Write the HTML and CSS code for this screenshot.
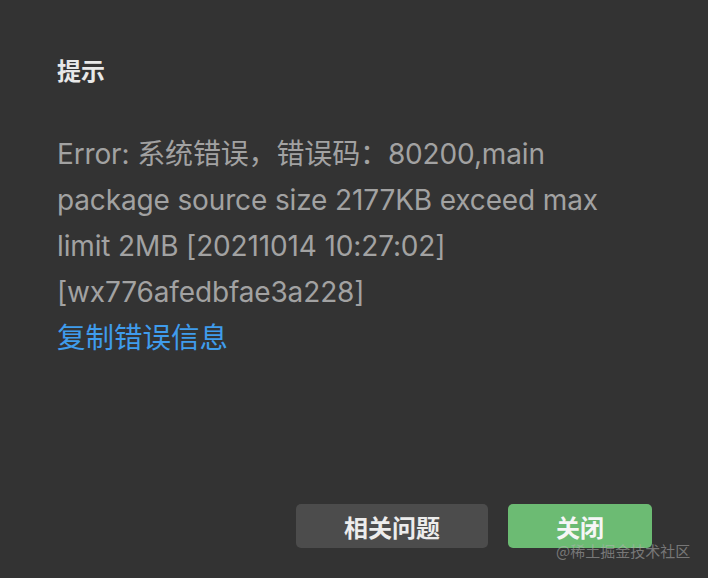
FILE: index.html
```html
<!DOCTYPE html>
<html lang="zh">
<head>
<meta charset="utf-8">
<link rel="stylesheet" href="styles.css">
</head>
<body>
<div class="dialog">
  <h1 class="title">提示</h1>
  <div class="message">
    <p class="error">Error: 系统错误，错误码：80200,main package source size 2177KB exceed max limit 2MB [20211014 10:27:02] [wx776afedbfae3a228]</p>
    <a class="copy" href="#">复制错误信息</a>
  </div>
  <div class="actions">
    <button class="btn btn-secondary">相关问题</button>
    <button class="btn btn-primary">关闭</button>
  </div>
  <div class="watermark">@稀土掘金技术社区</div>
</div>
</body>
</html>
```
FILE: styles.css
```css
html, body {
  margin: 0;
  padding: 0;
  background: #333333;
}
body {
  width: 708px;
  height: 578px;
  font-family: Inter, "Noto Sans CJK SC", sans-serif;
}
.dialog {
  position: relative;
  box-sizing: border-box;
  height: 578px;
  padding: 54px 56px 0 57px;
  display: flex;
  flex-direction: column;
}
.title {
  margin: 0;
  font-family: "Noto Sans CJK SC", sans-serif;
  font-size: 24px;
  line-height: 32px;
  font-weight: bold;
  color: #e8e8e8;
}
.message {
  margin-top: 45px;
  font-size: 28px;
  line-height: 46px;
  color: #a2a2a2;
}
.error {
  margin: 0;
  letter-spacing: -0.14px;
}
.copy {
  display: block;
  font-size: 28.5px;
  color: #3f9cec;
  text-decoration: none;
}
.actions {
  margin-top: auto;
  margin-bottom: 30px;
  display: flex;
  justify-content: flex-end;
  gap: 20px;
}
.btn {
  height: 44px;
  border: none;
  border-radius: 5px;
  font-family: "Noto Sans CJK SC", sans-serif;
  font-size: 24px;
  font-weight: bold;
  color: #ececec;
  padding: 0;
}
.btn-secondary {
  width: 192px;
  background: #4c4c4c;
}
.btn-primary {
  width: 144px;
  background: #6cbb73;
  color: #f6f6f6;
}
.watermark {
  position: absolute;
  left: 556px;
  top: 541px;
  font-family: "Noto Sans CJK SC", sans-serif;
  font-size: 15px;
  line-height: 19px;
  color: rgba(180, 180, 180, 0.55);
  white-space: nowrap;
}
```
